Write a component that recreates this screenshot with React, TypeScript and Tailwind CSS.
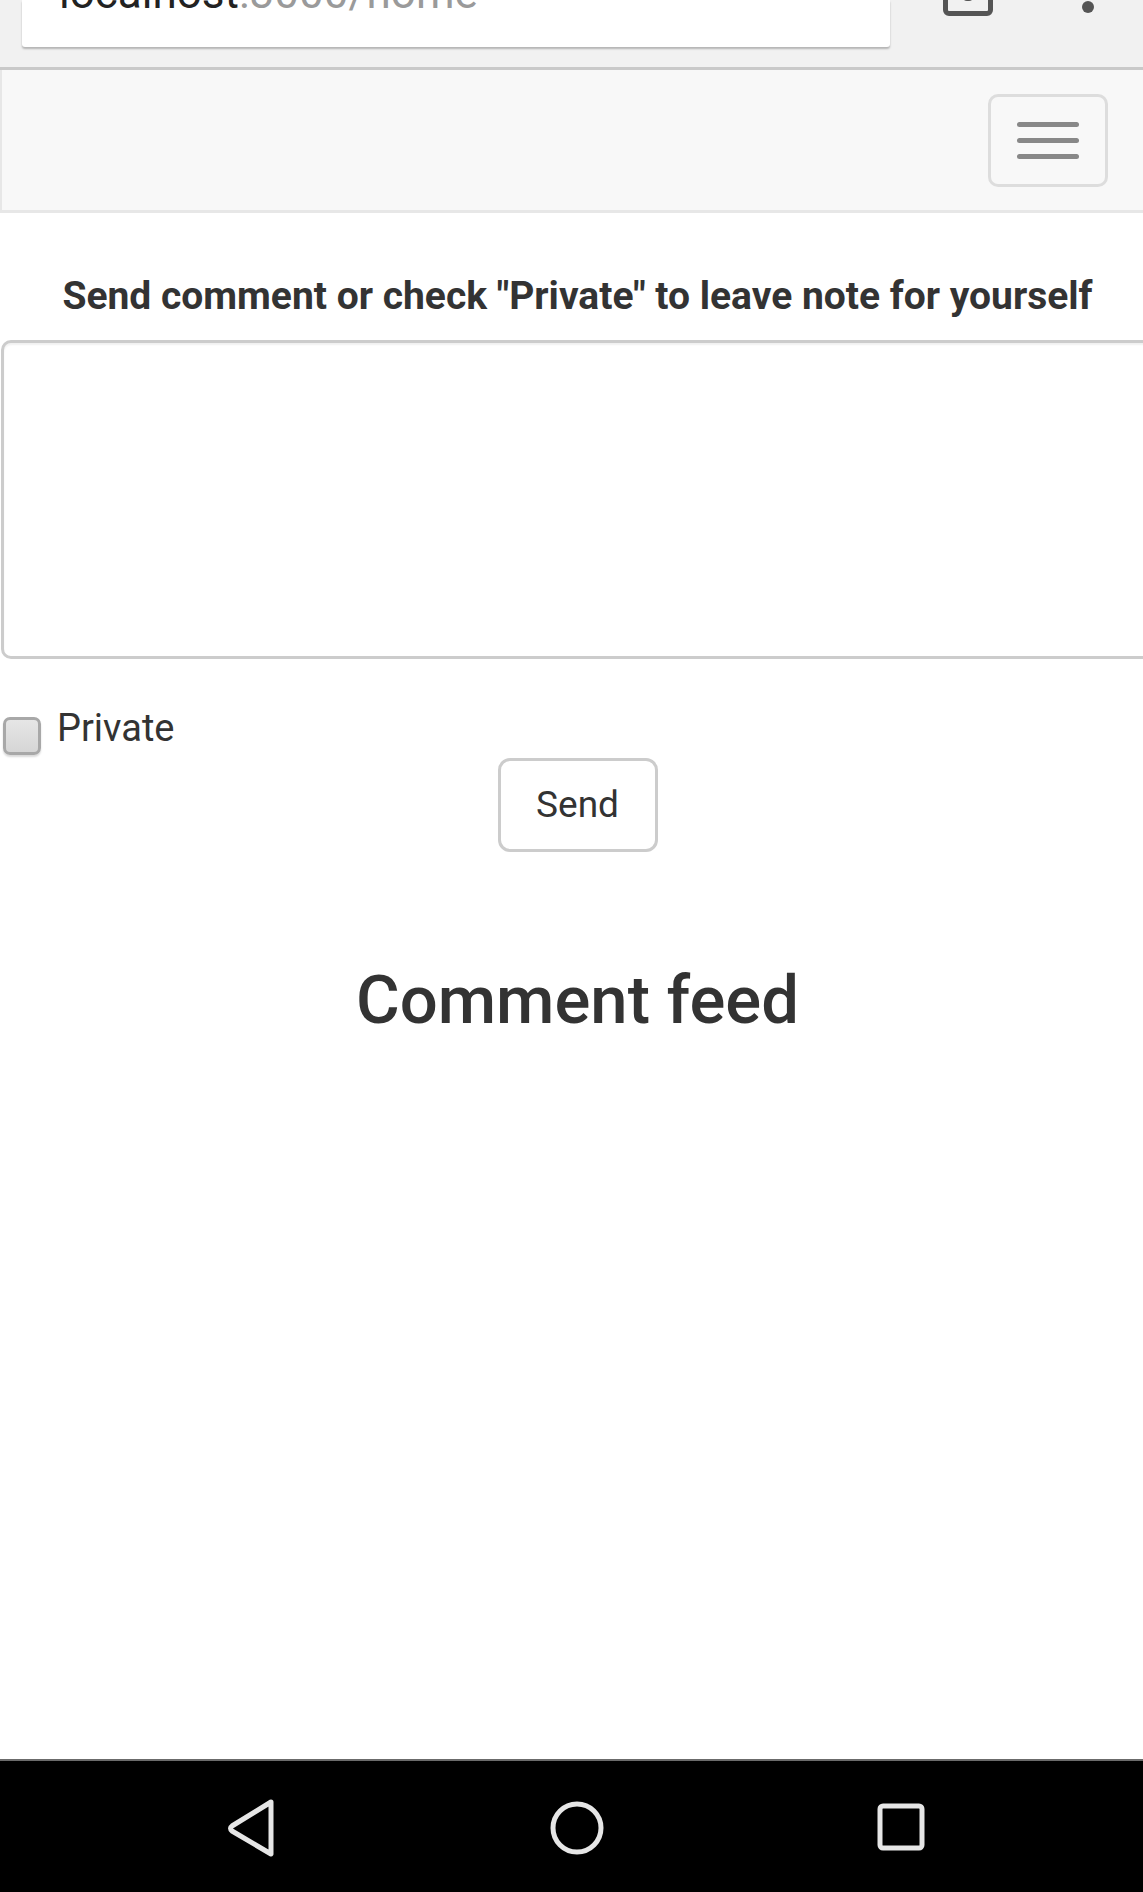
import React from 'react';

const NavIcons: React.FC = () => (
    <div className="relative h-[133px] bg-black border-t-[2px] border-[#6b6b6b]">
        <svg className="absolute left-[226px] top-[38px]" width="52" height="58" viewBox="0 0 52 58">
            <path d="M45 3 L6 27 Q3 29 6 32 L45 55 Z" fill="none" stroke="#e6e6e6" strokeWidth="5" strokeLinejoin="round" />
        </svg>
        <svg className="absolute left-[547px] top-[38px]" width="60" height="58" viewBox="0 0 60 58">
            <ellipse cx="30" cy="29" rx="24" ry="24" fill="none" stroke="#e6e6e6" strokeWidth="5" />
        </svg>
        <svg className="absolute left-[876px] top-[42px]" width="50" height="50" viewBox="0 0 50 50">
            <rect x="4" y="3" width="42" height="42" rx="3" fill="none" stroke="#e6e6e6" strokeWidth="5" />
        </svg>
    </div>
);

const App: React.FC = () => {
    return (
        <div className="w-[1143px] h-[1892px] overflow-hidden bg-white flex flex-col font-['Roboto','Liberation_Sans',sans-serif] text-[#333]">
            {/* browser chrome */}
            <div className="relative h-[70px] shrink-0 bg-[#f1f1f1] border-b-[3px] border-[#c9c9c9]">
                <div className="absolute left-[22px] top-0 w-[868px] h-[47px] bg-white rounded-b-[3px] shadow-[0_2px_2px_rgba(0,0,0,0.25)] overflow-hidden">
                    <div className="absolute left-[37px] top-[-32px] text-[44px] leading-[50px] whitespace-nowrap">
                        <span className="text-[#222]">localhost</span>
                        <span className="text-[#9a9a9a]">:3000/home</span>
                    </div>
                </div>
                <div className="absolute left-[943px] top-[-14px] w-[50px] h-[30px] border-[5px] border-[#555] rounded-[6px]">
                    <div className="mx-auto w-[12px] h-[10px] rounded-full bg-[#555]" />
                </div>
                <div className="absolute left-[1082px] top-[1px] w-[12px] h-[12px] rounded-full bg-[#555]" />
            </div>

            {/* navbar */}
            <div className="h-[143px] shrink-0 bg-[#f8f8f8] border-l-[2px] border-b-[3px] border-[#e7e7e7] flex justify-end items-start">
                <button className="mt-[24px] mr-[35px] w-[120px] h-[93px] rounded-[10px] border-[3px] border-[#dddddd] flex flex-col items-center justify-center gap-[11px]">
                    <span className="block w-[62px] h-[5px] rounded-full bg-[#888]" />
                    <span className="block w-[62px] h-[5px] rounded-full bg-[#888]" />
                    <span className="block w-[62px] h-[5px] rounded-full bg-[#888]" />
                </button>
            </div>

            {/* content */}
            <div className="w-[1155px] flex flex-col">
                <h4 className="mt-[60px] text-center text-[39px] leading-[46px] font-bold whitespace-nowrap">
                    Send comment or check "Private" to leave note for yourself
                </h4>
                <textarea className="mt-[21px] ml-[1px] w-[1160px] h-[319px] rounded-[10px] border-[3px] border-[#cccccc] bg-white shadow-[inset_0_2px_2px_rgba(0,0,0,0.06)] resize-none" />
                <label className="mt-[46px] flex items-start">
                    <span className="mt-[12px] ml-[3px] w-[38px] h-[38px] rounded-[7px] border-[3px] border-[#a8a8a8] bg-gradient-to-b from-[#e6e6e6] to-[#d6d6d6] shadow-[0_2px_2px_rgba(0,0,0,0.15)]" />
                    <span className="ml-[16px] text-[38px] leading-[46px]">Private</span>
                </label>
                <div className="mt-[3px] flex justify-center">
                    <button className="w-[160px] h-[94px] rounded-[12px] border-[3px] border-[#cccccc] bg-white text-[37px] text-[#333]">
                        Send
                    </button>
                </div>
                <h2 className="mt-[111px] text-center text-[67px] leading-[74px] font-medium">Comment feed</h2>
            </div>

            <div className="flex-1" />
            <NavIcons />
        </div>
    );
};

export default App;
